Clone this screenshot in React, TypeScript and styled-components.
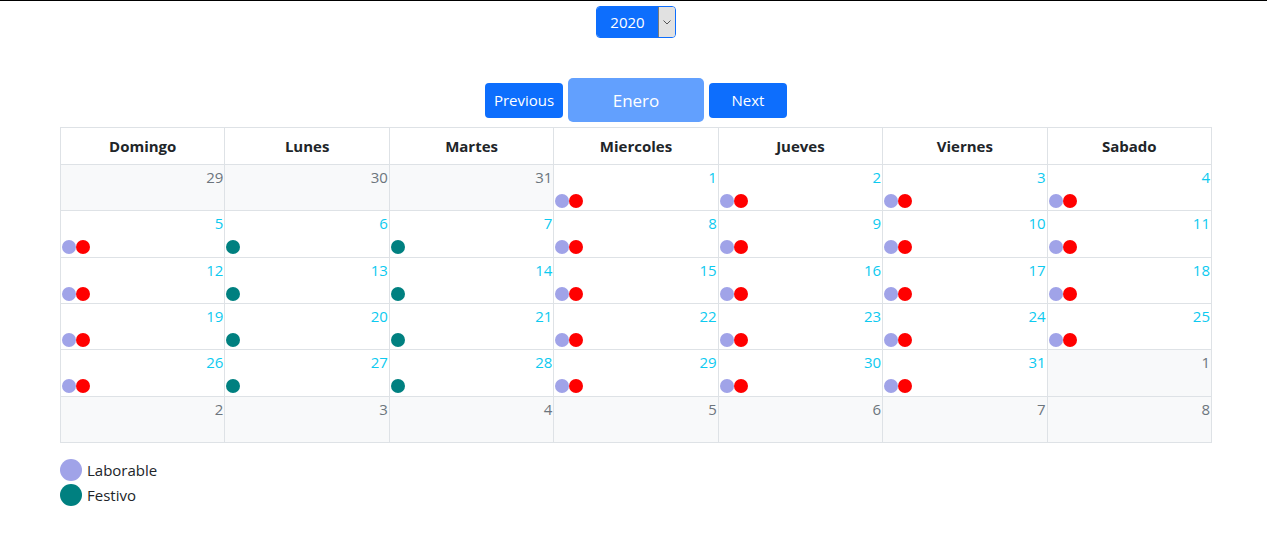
import styled, { createGlobalStyle } from "styled-components";

const GlobalStyle = createGlobalStyle`
  body {
    margin: 0;
    font-family: "Open Sans", "Noto Sans", sans-serif;
    color: #212529;
    background: #fff;
  }
  * { box-sizing: border-box; }
`

const Page = styled.div`
  width: 1272px;
  display: flex;
  flex-direction: column;
  align-items: center;
`

const TopRule = styled.div`
  align-self: flex-start;
  width: 1267px;
  height: 1px;
  background: #000;
`

const YearSelect = styled.div`
  margin-top: 5px;
  height: 32px;
  width: 80px;
  display: flex;
  border-radius: 4px;
  overflow: hidden;
  border: 1px solid #0d6efd;
`

const YearValue = styled.div`
  flex: 1;
  background: #0d6efd;
  color: #fff;
  font-size: 15px;
  display: flex;
  align-items: center;
  justify-content: center;
`

const YearArrow = styled.div`
  width: 17px;
  background: #e1e1e1;
  border-left: 1px solid #7a7a7a;
  display: flex;
  align-items: center;
  justify-content: center;
`

const MonthBar = styled.div`
  margin-top: 40px;
  display: flex;
  align-items: center;
  gap: 5px;
`

const NavButton = styled.button<{ $month?: boolean }>`
  border: none;
  border-radius: ${p => p.$month ? "5px" : "4px"};
  background: ${p => p.$month ? "#62a0fe" : "#0d6efd"};
  color: #fff;
  font-family: inherit;
  font-size: ${p => p.$month ? "17px" : "15px"};
  width: ${p => p.$month ? "136px" : "78px"};
  height: ${p => p.$month ? "44px" : "35px"};
  padding: 0;
`

const Calendar = styled.div`
  margin-top: 5px;
  width: 1152px;
  display: grid;
  grid-template-columns: repeat(7, 1fr);
  grid-template-rows: 37px repeat(6, 46.33px);
  border-top: 1px solid #dee2e6;
  border-left: 1px solid #dee2e6;
`

const HeadCell = styled.div`
  border-right: 1px solid #dee2e6;
  border-bottom: 1px solid #dee2e6;
  display: flex;
  align-items: center;
  justify-content: center;
  font-weight: 700;
  font-size: 15px;
`

const DayCell = styled.div<{ $outside?: boolean }>`
  border-right: 1px solid #dee2e6;
  border-bottom: 1px solid #dee2e6;
  background: ${p => p.$outside ? "#f8f9fa" : "#fff"};
  display: flex;
  flex-direction: column;
`

const DayNumber = styled.div<{ $outside?: boolean }>`
  text-align: right;
  font-size: 15px;
  line-height: 24px;
  padding-right: 1px;
  color: ${p => p.$outside ? "#6c757d" : "#0dcaf0"};
`

const Dots = styled.div`
  margin-top: 5px;
  padding-left: 1px;
  display: flex;
  height: 14px;
`

const Dot = styled.span<{ $color: string; $size?: number }>`
  display: inline-block;
  width: ${p => p.$size ?? 14}px;
  height: ${p => p.$size ?? 14}px;
  border-radius: 50%;
  background: ${p => p.$color};
`

const Legend = styled.div`
  align-self: flex-start;
  margin: 16px 0 0 60px;
  display: flex;
  flex-direction: column;
  gap: 3px;
`

const LegendRow = styled.div`
  display: flex;
  align-items: center;
  gap: 5px;
  font-size: 15px;
  height: 22px;
`

const LAB = "#a0a3e8"
const RED = "#ff0000"
const FEST = "#008080"

const days = ["Domingo", "Lunes", "Martes", "Miercoles", "Jueves", "Viernes", "Sabado"]

type Cell = { n: number; outside: boolean; col: number }

const cells: Cell[] = []
;[29, 30, 31].forEach((n, i) => cells.push({ n, outside: true, col: i }))
for (let d = 1; d <= 31; d++) cells.push({ n: d, outside: false, col: (d + 2) % 7 })
for (let d = 1; d <= 8; d++) cells.push({ n: d, outside: true, col: (d + 33) % 7 })

export default function App() {
  return (
    <Page>
      <GlobalStyle />
      <TopRule />
      <YearSelect>
        <YearValue>2020</YearValue>
        <YearArrow>
          <svg width="8" height="5" viewBox="0 0 8 5">
            <path d="M0.5 0.5 L4 4 L7.5 0.5" fill="none" stroke="#555" strokeWidth="1" />
          </svg>
        </YearArrow>
      </YearSelect>
      <MonthBar>
        <NavButton>Previous</NavButton>
        <NavButton $month>Enero</NavButton>
        <NavButton>Next</NavButton>
      </MonthBar>
      <Calendar>
        {days.map(d => <HeadCell key={d}>{d}</HeadCell>)}
        {cells.map((c, i) => {
          const festivo = !c.outside && (c.col === 1 || c.col === 2) && c.n >= 6
          return (
            <DayCell key={i} $outside={c.outside}>
              <DayNumber $outside={c.outside}>{c.n}</DayNumber>
              {!c.outside && (
                <Dots>
                  {festivo ? (
                    <Dot $color={FEST} />
                  ) : (
                    <>
                      <Dot $color={LAB} />
                      <Dot $color={RED} />
                    </>
                  )}
                </Dots>
              )}
            </DayCell>
          )
        })}
      </Calendar>
      <Legend>
        <LegendRow><Dot $color={LAB} $size={22} />Laborable</LegendRow>
        <LegendRow><Dot $color={FEST} $size={22} />Festivo</LegendRow>
      </Legend>
    </Page>
  )
}
